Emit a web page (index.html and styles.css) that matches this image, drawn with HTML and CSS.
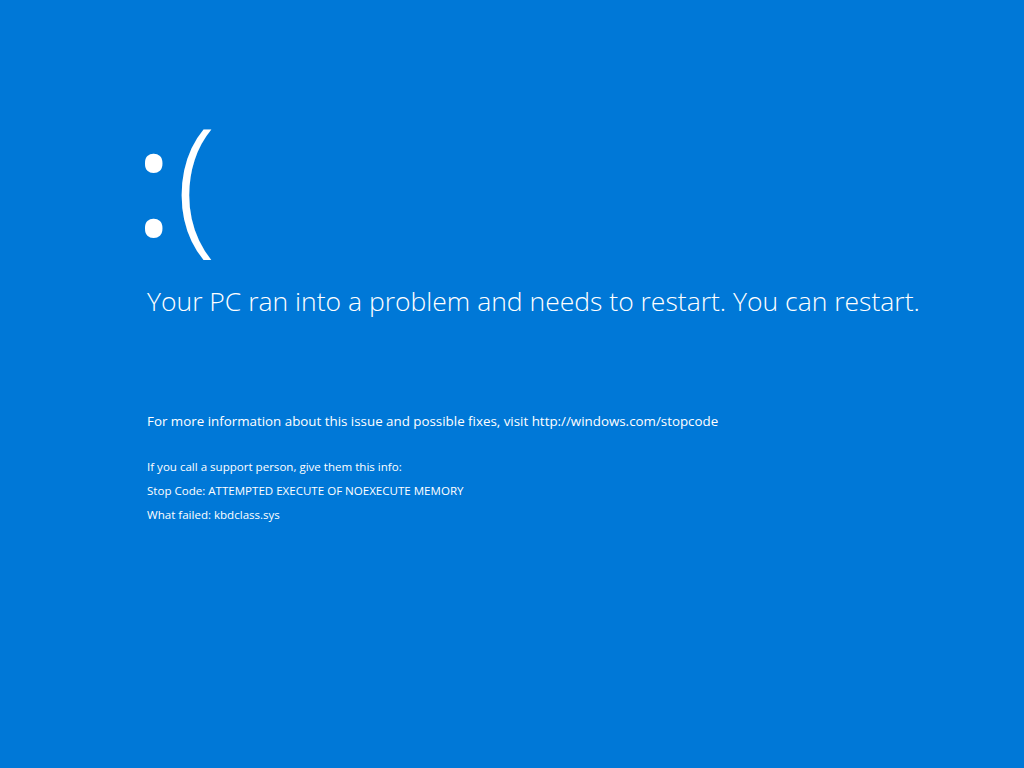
FILE: index.html
```html
<!DOCTYPE html>
<html lang="en">
<head>
<meta charset="utf-8">
<title>Blue screen</title>
<link rel="stylesheet" href="styles.css">
</head>
<body>
<main class="screen">
  <div class="face"><span class="colon">:</span><span class="paren">(</span></div>
  <h1 class="headline">Your PC ran into a problem and needs to restart. You can restart.</h1>
  <p class="more">For more information about this issue and possible fixes, visit http://windows.com/stopcode</p>
  <div class="details">
    <p class="line">If you call a support person, give them this info:</p>
    <p class="line">Stop Code: ATTEMPTED EXECUTE OF NOEXECUTE MEMORY</p>
    <p class="line">What failed: kbdclass.sys</p>
  </div>
</main>
</body>
</html>
```

FILE: styles.css
```css
html, body {
  margin: 0;
  padding: 0;
  height: 100%;
}
body {
  background: #0078d7;
  color: #ffffff;
  font-family: "Open Sans", "Noto Sans", sans-serif;
}
.screen {
  display: flex;
  flex-direction: column;
  padding: 83px 0 0 147px;
}
.face {
  font-size: 150px;
  line-height: 190px;
  margin-left: -13px;
}
.colon {
  font-weight: 400;
  margin-right: 2px;
}
.paren {
  font-weight: 300;
}
.headline {
  margin: 10px 0 0 0;
  font-size: 26.5px;
  font-weight: 300;
  line-height: 36px;
}
.more {
  margin: 92px 0 0 0;
  font-size: 13.35px;
  font-weight: 400;
  line-height: 20px;
}
.details {
  display: flex;
  flex-direction: column;
  gap: 6px;
  margin-top: 27px;
}
.line {
  margin: 0;
  font-size: 11.55px;
  line-height: 18px;
}
```
